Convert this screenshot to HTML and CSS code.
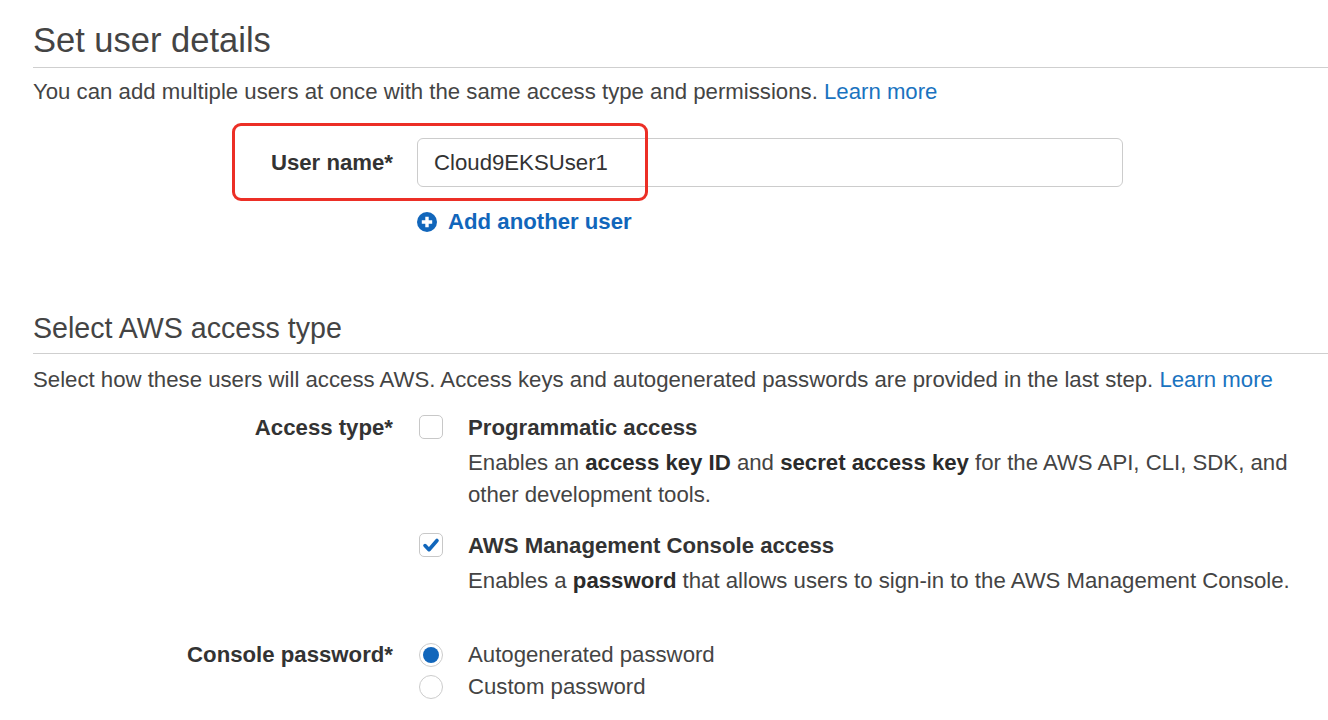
FILE: index.html
```html
<!DOCTYPE html>
<html>
<head>
<meta charset="utf-8">
<link rel="stylesheet" href="styles.css">
</head>
<body>
<div class="page">
  <section class="section">
    <h1 class="title title-lg">Set user details</h1>
    <p class="intro">You can add multiple users at once with the same access type and permissions. <a class="link">Learn more</a></p>
    <div class="field field-user">
      <div class="highlight"></div>
      <div class="label">User name*</div>
      <div class="input">Cloud9EKSUser1</div>
    </div>
    <div class="field field-add">
      <div></div>
      <a class="add-link">
        <svg class="add-icon" width="20" height="20" viewBox="0 0 20 20"><circle cx="10" cy="10" r="10" fill="#1166bb"/><path d="M10 4.8v10.4M4.8 10h10.4" stroke="#fff" stroke-width="3.4" stroke-linecap="butt"/></svg>
        <span>Add another user</span>
      </a>
    </div>
  </section>

  <section class="section section-access">
    <h2 class="title title-md">Select AWS access type</h2>
    <p class="intro intro-access">Select how these users will access AWS. Access keys and autogenerated passwords are provided in the last step. <a class="link">Learn more</a></p>

    <div class="field field-access">
      <div class="label">Access type*</div>
      <div class="options">
        <div class="option">
          <span class="checkbox"></span>
          <div class="option-body">
            <div class="option-title">Programmatic access</div>
            <div class="option-desc">Enables an <b>access key ID</b> and <b>secret access key</b> for the AWS API, CLI, SDK, and other development tools.</div>
          </div>
        </div>
        <div class="option option-next">
          <span class="checkbox checked"><svg width="22" height="22" viewBox="0 0 22 22"><path d="M5 11.6l4 4.1 8-9.2" fill="none" stroke="#1166bb" stroke-width="3.6" stroke-linecap="round" stroke-linejoin="round"/></svg></span>
          <div class="option-body">
            <div class="option-title">AWS Management Console access</div>
            <div class="option-desc">Enables a <b>password</b> that allows users to sign-in to the AWS Management Console.</div>
          </div>
        </div>
      </div>
    </div>

    <div class="field field-password">
      <div class="label">Console password*</div>
      <div class="radios">
        <div class="radio-row"><span class="radio checked"></span><span>Autogenerated password</span></div>
        <div class="radio-row"><span class="radio"></span><span>Custom password</span></div>
      </div>
    </div>
  </section>
</div>
</body>
</html>
```

FILE: styles.css
```css
html, body {
  margin: 0;
  padding: 0;
  background: #ffffff;
  overflow: hidden;
}

body {
  font-family: "Liberation Sans", Arial, Helvetica, sans-serif;
  color: #444444;
  font-size: 22.2px;
  line-height: 32px;
}

.page {
  padding-left: 33px;
}

.title {
  margin: 0;
  font-weight: normal;
  color: #444444;
  padding-bottom: 7px;
  border-bottom: 1px solid #cfcfcf;
}

.title-lg {
  margin-top: 20px;
  font-size: 34.5px;
  line-height: 40px;
}

.title-md {
  font-size: 28.6px;
  line-height: 36px;
}

.intro {
  margin: 8px 0 0 0;
  white-space: nowrap;
}

.intro-access {
  margin-top: 10px;
}

.link {
  color: #1a73c0;
  text-decoration: none;
}

.field {
  display: grid;
  grid-template-columns: 360px 706px;
  column-gap: 24px;
  position: relative;
}

.field-user {
  margin-top: 30px;
  align-items: center;
}

.label {
  text-align: right;
  font-weight: bold;
  color: #333333;
  white-space: nowrap;
}

.input {
  box-sizing: border-box;
  height: 49px;
  border: 1.5px solid #cccccc;
  border-radius: 6px;
  padding-left: 16px;
  display: flex;
  align-items: center;
  color: #333333;
}

.highlight {
  position: absolute;
  left: 199px;
  top: -15px;
  width: 416px;
  height: 78px;
  box-sizing: border-box;
  border: 3px solid #ec2f26;
  border-radius: 9px;
}

.field-add {
  margin-top: 19px;
}

.add-link {
  display: flex;
  align-items: center;
  gap: 11px;
  font-weight: bold;
  color: #1166bb;
  white-space: nowrap;
}

.add-icon {
  flex: none;
}

.section-access {
  margin-top: 72px;
}

.field-access {
  margin-top: 16px;
  grid-template-columns: 360px 880px;
}

.option {
  display: flex;
  gap: 25px;
}

.option-next {
  margin-top: 19px;
}

.checkbox {
  flex: none;
  box-sizing: border-box;
  width: 24px;
  height: 24px;
  margin-left: 2px;
  margin-top: 3px;
  border: 1.5px solid #c8c8c8;
  border-radius: 5px;
  background: #fff;
  display: flex;
  align-items: center;
  justify-content: center;
}

.checkbox svg {
  display: block;
}

.option-body {
  width: 845px;
}

.option-title {
  font-weight: bold;
  color: #333333;
}

.option-desc {
  margin-top: 3px;
}

.option-desc b {
  color: #2b2b2b;
}

.field-password {
  margin-top: 42px;
  grid-template-columns: 360px 880px;
}

.radio-row {
  display: flex;
  gap: 25px;
  align-items: flex-start;
}

.radio {
  flex: none;
  box-sizing: border-box;
  width: 24px;
  height: 24px;
  margin-left: 2px;
  margin-top: 4px;
  border: 1.5px solid #cccccc;
  border-radius: 50%;
  background: #fff;
  position: relative;
}

.radio.checked::after {
  content: "";
  position: absolute;
  left: 2.5px;
  top: 2.5px;
  width: 16px;
  height: 16px;
  border-radius: 50%;
  background: #1166bb;
}
```
